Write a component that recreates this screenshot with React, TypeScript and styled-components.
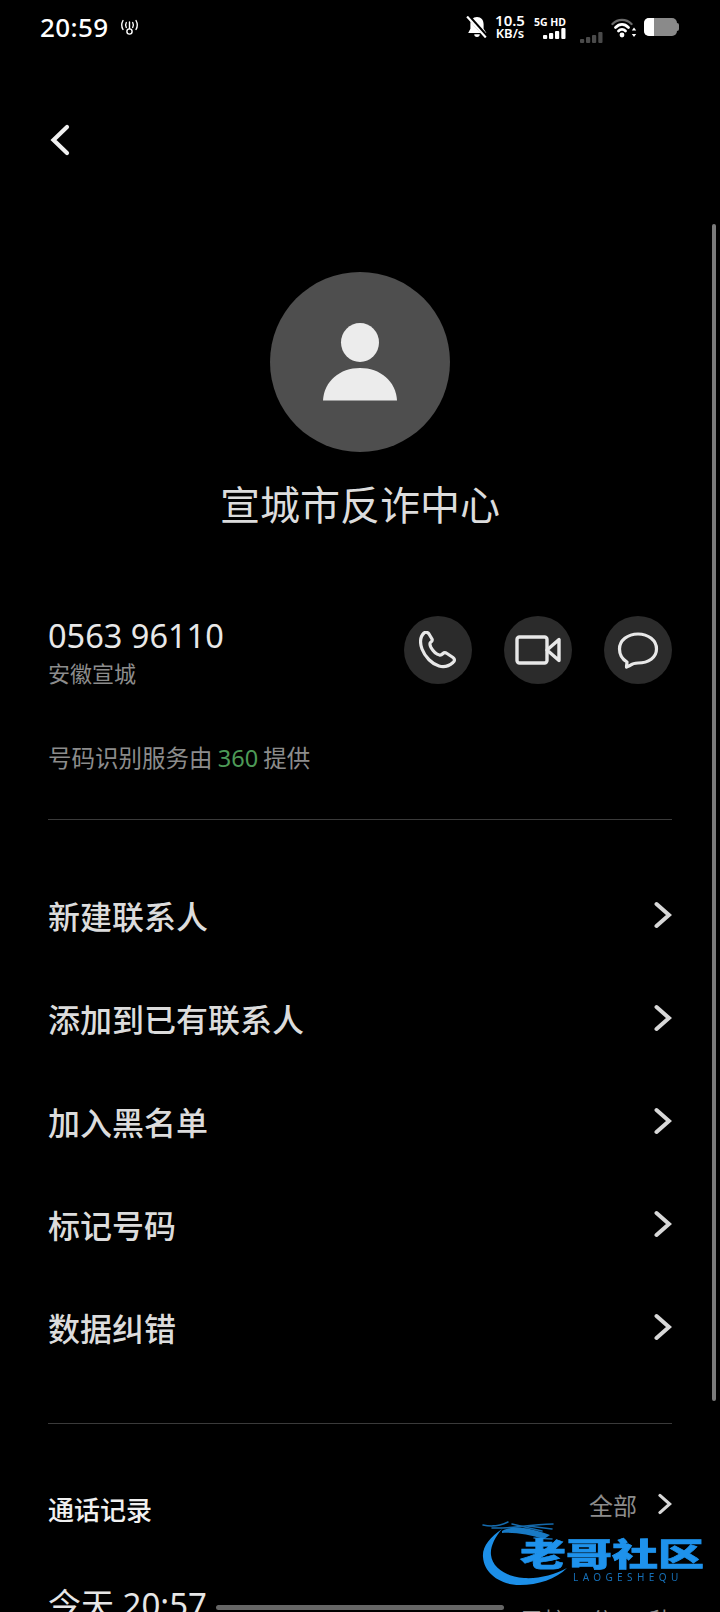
import React from 'react'
import styled, { createGlobalStyle } from 'styled-components'

const CJK = `"Noto Sans CJK SC", "Noto Sans", sans-serif`
const LATIN = `"Noto Sans", "Noto Sans CJK SC", sans-serif`

const GlobalStyle = createGlobalStyle`
  html, body {
    margin: 0;
    padding: 0;
    background: #000;
  }
`

const Page = styled('div')`
  position: relative;
  width: 720px;
  height: 1612px;
  overflow: hidden;
  background: #000;
  font-family: ${CJK};
  color: #e6e6e6;
`

const StatusBar = styled('div')`
  display: flex;
  justify-content: space-between;
  align-items: center;
  height: 54px;
  padding: 0 41px 0 40px;
  color: #fff;
`
const StatusGroup = styled('div')`
  display: flex;
  align-items: center;
`
const Clock = styled('span')`
  font-family: ${LATIN};
  font-size: 26px;
  font-weight: 500;
  letter-spacing: 0.4px;
  margin-right: 10px;
`
const Speed = styled('div')`
  display: flex;
  flex-direction: column;
  align-items: center;
  width: 32px;
  margin: 0 8px 0 6px;
  font-family: ${LATIN};
  font-weight: 600;
  line-height: 13px;
  font-size: 15px;
`
const SpeedUnit = styled('span')`
  font-size: 13px;
`
const NetStack = styled('div')`
  display: flex;
  flex-direction: column;
  align-items: flex-end;
  width: 32px;
  margin-right: 14px;
  font-family: ${LATIN};
  font-weight: 700;
  font-size: 10.5px;
  line-height: 12px;
  white-space: nowrap;
`
const DimSignal = styled('svg')`
  margin: 20px 8px 0 0;
`
const Battery = styled('div')`
  display: flex;
  width: 33px;
  height: 18px;
  margin-left: 7px;
  border-radius: 5px;
  overflow: hidden;
  background: #8a8a8a;
`
const BatteryFill = styled('div')`
  width: 10px;
  background: #fff;
`
const BatteryCap = styled('div')`
  width: 2px;
  height: 8px;
  border-radius: 0 2px 2px 0;
  background: #8a8a8a;
`

const BackBar = styled('div')`
  display: flex;
  align-items: center;
  height: 172px;
  padding: 0 0 0 50px;
`

const Header = styled('div')`
  display: flex;
  flex-direction: column;
  align-items: center;
`
const Avatar = styled('div')`
  display: flex;
  align-items: center;
  justify-content: center;
  width: 180px;
  height: 180px;
  margin-top: 46px;
  border-radius: 50%;
  background: #4e4e4e;
`
const Name = styled('h1')`
  margin: 22px 0 0;
  font-size: 40px;
  line-height: 58px;
  font-weight: 400;
  color: #dcdcdc;
`

const NumberRow = styled('div')`
  display: flex;
  justify-content: space-between;
  align-items: center;
  margin-top: 81px;
  padding: 0 48px;
`
const NumberText = styled('div')`
  font-family: ${LATIN};
  font-size: 32.5px;
  line-height: 45px;
  color: #e8e8e8;
`
const Region = styled('div')`
  font-size: 22px;
  line-height: 29px;
  color: #8c8c8c;
`
const Actions = styled('div')`
  display: flex;
  gap: 32px;
`
const ActionButton = styled('div')`
  display: flex;
  align-items: center;
  justify-content: center;
  width: 68px;
  height: 68px;
  border-radius: 50%;
  background: #2b2b2b;
`

const Provider = styled('div')`
  margin-top: 53px;
  padding: 0 48px;
  font-size: 23.5px;
  line-height: 34px;
  color: #8c8c8c;
`
const Green = styled('span')`
  font-family: ${LATIN};
  color: #4d9a57;
`

const Divider = styled('div')`
  height: 1px;
  margin: ${({ $top }: { $top: number }) => $top}px 48px 0;
  background: #3a3a3a;
`

const Menu = styled('div')`
  margin-top: 43px;
`
const MenuRow = styled('div')`
  display: flex;
  justify-content: space-between;
  align-items: center;
  height: 103px;
  padding: 0 48px;
  font-size: 32px;
  font-weight: 500;
  color: #dcdcdc;
`

const RecordsHeader = styled('div')`
  display: flex;
  justify-content: space-between;
  align-items: center;
  margin-top: 64px;
  padding: 0 48px;
  height: 40px;
`
const RecordsTitle = styled('div')`
  font-size: 26px;
  font-weight: 500;
  color: #f0f0f0;
`
const AllLink = styled('div')`
  display: flex;
  align-items: center;
  gap: 21px;
  margin-top: -8px;
  font-size: 24px;
  color: #8c8c8c;
`
const CallRow = styled('div')`
  display: flex;
  justify-content: space-between;
  align-items: flex-start;
  margin-top: 54px;
  padding: 0 48px;
`
const CallTime = styled('div')`
  font-family: ${LATIN};
  font-size: 33px;
  line-height: 46px;
  color: #e6e6e6;
`
const CallNote = styled('div')`
  margin-top: 20px;
  font-size: 23px;
  line-height: 34px;
  white-space: pre;
  color: #8c8c8c;
`

const Scrollbar = styled('div')`
  position: absolute;
  top: 224px;
  right: 4px;
  width: 4px;
  height: 1177px;
  border-radius: 2px;
  background: #7b7b7b;
`
const HomeIndicator = styled('div')`
  position: absolute;
  left: 216px;
  top: 1605px;
  width: 288px;
  height: 5px;
  border-radius: 3px;
  background: #666;
`

const Watermark = styled('div')`
  position: absolute;
  left: 482px;
  top: 1517px;
  width: 222px;
  height: 72px;
  filter: blur(0.5px);
`
const WatermarkArt = styled('svg')`
  position: absolute;
  left: 0;
  top: 0;
`
const WatermarkTitle = styled('div')`
  position: absolute;
  left: 38px;
  top: 20px;
  font-family: ${CJK};
  font-size: 46px;
  line-height: 46px;
  font-weight: 900;
  white-space: nowrap;
  transform: scaleY(0.68);
  transform-origin: top left;
  color: #1e92ec;
  -webkit-text-stroke: 1px #1e92ec;
`
const WatermarkSub = styled('div')`
  position: absolute;
  left: 91px;
  top: 54px;
  font-family: ${LATIN};
  font-size: 10px;
  line-height: 12px;
  letter-spacing: 4.4px;
  white-space: nowrap;
  color: #1670b8;
`

const Chevron = ({ small }: { small?: boolean }) => (
  <svg width={small ? 14 : 18} height={small ? 24 : 28} viewBox="0 0 18 28" fill="none">
    <path d="M2.5 3 L15 14 L2.5 25" stroke="#d8d8d8" strokeWidth="4" strokeLinecap="round" />
  </svg>
)

const SignalBars = () => (
  <>
    <rect x="0" y="7" width="4.2" height="4" rx="1" />
    <rect x="6" y="5" width="4.2" height="6" rx="1" />
    <rect x="12" y="3" width="4.2" height="8" rx="1" />
    <rect x="18.3" y="0" width="4.2" height="11" rx="1" />
  </>
)

const menuItems = ['新建联系人', '添加到已有联系人', '加入黑名单', '标记号码', '数据纠错']

export default function App() {
  return (
    <Page>
      <GlobalStyle />
      <StatusBar>
        <StatusGroup>
          <Clock>20:59</Clock>
          <svg width="21" height="18" viewBox="0 0 21 18" fill="none" stroke="#fff" strokeWidth="1.4" strokeLinecap="round">
            <circle cx="10.5" cy="13.5" r="2.6" />
            <path d="M10.5 4v6.5" />
            <path d="M7.3 4.5c-.9 1.6-.9 3.4 0 5M13.7 4.5c.9 1.6.9 3.4 0 5" />
            <path d="M4 2.5c-1.7 3-1.7 6 0 9M17 2.5c1.7 3 1.7 6 0 9" />
          </svg>
        </StatusGroup>
        <StatusGroup>
          <svg width="22" height="22" viewBox="0 0 20 20" fill="#fff">
            <path d="M10 1c3.8 0 6 2.800 6 6.500v4l2.500 4H2l2-4v-4C4 3.800 6.200 1 10 1z" />
            <path d="M7.500 16.500h5a2.500 2.500 0 0 1-5 0z" />
            <path d="M1.500 -.5 L18.500 18.500" stroke="#000" strokeWidth="3.600" />
            <path d="M1 .5 L18 19.500" stroke="#fff" strokeWidth="2" />
          </svg>
          <Speed>
            <span>10.5</span>
            <SpeedUnit>KB/s</SpeedUnit>
          </Speed>
          <NetStack>
            <span>5G HD</span>
            <svg width="23" height="11" viewBox="0 0 23 11" fill="#fff">
              <SignalBars />
            </svg>
          </NetStack>
          <DimSignal width="23" height="11" viewBox="0 0 23 11" fill="#4a4a4a">
            <SignalBars />
          </DimSignal>
          <svg width="26" height="21" viewBox="0 0 26 21" fill="none" strokeLinecap="round">
            <path d="M1.500 7C7 1.500 15 1.500 20.500 7" stroke="#6a6a6a" strokeWidth="2.400" />
            <path d="M4.500 10.500C8.500 6.500 13.500 6.500 17.500 10.500" stroke="#fff" strokeWidth="2.800" />
            <path d="M7.500 14c2-2 5-2 7 0" stroke="#fff" strokeWidth="2.800" />
            <circle cx="11" cy="18" r="2.400" fill="#fff" />
            <path d="M23 10.500l2.200 3h-4.400zM23 20l2.200-3h-4.400z" fill="#fff" />
          </svg>
          <Battery>
            <BatteryFill />
          </Battery>
          <BatteryCap />
        </StatusGroup>
      </StatusBar>

      <BackBar>
        <svg width="20" height="32" viewBox="0 0 20 32" fill="none">
          <path d="M17 3 L3.500 16 L17 29" stroke="#f0f0f0" strokeWidth="4.200" strokeLinecap="round" />
        </svg>
      </BackBar>

      <Header>
        <Avatar>
          <svg width="76" height="78" viewBox="0 0 76 78" fill="#ececec">
            <ellipse cx="38" cy="19.500" rx="19" ry="19.500" />
            <path d="M1 77.500C2 58 18 45 38 45s36 13 37 32.500z" />
          </svg>
        </Avatar>
        <Name>宣城市反诈中心</Name>
      </Header>

      <NumberRow>
        <div>
          <NumberText>0563 96110</NumberText>
          <Region>安徽宣城</Region>
        </div>
        <Actions>
          <ActionButton>
            <svg width="38" height="38" viewBox="0 0 38 38" fill="none" stroke="#e8e8e8" strokeWidth="3.200" strokeLinejoin="round">
              <path d="M5 2C7 .5 9 1.500 10 3l3 5c.7 1.500 0 2.500-1.500 3.500-1 1-1 2 .5 5 2.500 4.500 6 7 8.500 7.500 1.500.5 2.500-.5 3.500-1.500s2.500-1 4 0l6 4c2 1.500 2 3.500 0 5-4 3.500-9 5-14 3.500-7-2-14-9-17-17C.5 11 1 6 5 2z" />
            </svg>
          </ActionButton>
          <ActionButton>
            <svg width="46" height="30" viewBox="0 0 46 30" fill="none" stroke="#e8e8e8" strokeWidth="3.400" strokeLinejoin="round">
              <rect x="2" y="2" width="30" height="26" rx="2.500" />
              <path d="M32 15 L44 4.500 V25.500 Z" />
            </svg>
          </ActionButton>
          <ActionButton>
            <svg width="42" height="38" viewBox="0 0 42 38" fill="none" stroke="#e8e8e8" strokeWidth="3.200" strokeLinejoin="round">
              <path d="M10 31C5 28 2.500 23 2.500 18 2.500 9.500 10.500 3 21 3s18.500 6.500 18.500 15S31.500 32 21 32c-3 0-5.500.5-8 2.500l-3.500 1.500z" />
            </svg>
          </ActionButton>
        </Actions>
      </NumberRow>

      <Provider>
        号码识别服务由 <Green>360</Green> 提供
      </Provider>

      <Divider $top={44} />

      <Menu>
        {menuItems.map((item) => (
          <MenuRow key={item}>
            <span>{item}</span>
            <Chevron />
          </MenuRow>
        ))}
      </Menu>

      <Divider $top={45} />

      <RecordsHeader>
        <RecordsTitle>通话记录</RecordsTitle>
        <AllLink>
          <span>全部</span>
          <Chevron small />
        </AllLink>
      </RecordsHeader>

      <CallRow>
        <CallTime>今天 20:57</CallTime>
        <CallNote>已接 1 分 14 秒</CallNote>
      </CallRow>

      <Scrollbar />
      <HomeIndicator />

      <Watermark>
        <WatermarkArt width="222" height="72" viewBox="0 0 222 72" fill="none">
          <path d="M20 12C8 20 0 30 1 40 2 56 18 68 38 68 56 68 74 62 85 51 72 58 56 62 42 61 24 60 10 50 9 38 8 30 13 20 20 12z" fill="#1c8fe8" />
          <path d="M20 14C30 8 46 10 68 18L62 22C48 18 34 15 20 16z" fill="#1c8fe8" opacity="0.85" />
          <g stroke="#1c8fe8" strokeWidth="1.500" strokeLinecap="round" opacity="0.75">
            <path d="M1 8C10 10 18 9 26 5" />
            <path d="M10 11C24 12 44 8 71 7" />
            <path d="M30 7L60 14" />
            <path d="M46 9L70 12" />
            <path d="M52 21L70 22" />
          </g>
        </WatermarkArt>
        <WatermarkTitle>老哥社区</WatermarkTitle>
        <WatermarkSub>LAOGESHEQU</WatermarkSub>
      </Watermark>
    </Page>
  )
}
